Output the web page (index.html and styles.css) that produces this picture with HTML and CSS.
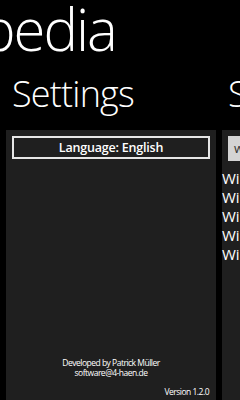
FILE: index.html
```html
<!DOCTYPE html>
<html>
<head>
<title>Wikipedia Settings</title>
<link rel="stylesheet" href="styles.css">
</head>
<body>

  <div class="app-title">Wikipedia</div>

  <div class="pivot">
    <div class="pivot-item">
      <div class="pivot-header">Settings</div>
      <div class="panel settings-panel">
        <button class="language-button">Language: English</button>
        <div class="spacer"></div>
        <div class="credits">
          Developed by Patrick Müller<br>
          software@4-haen.de
        </div>
        <div class="version">Version 1.2.0</div>
      </div>
    </div>

    <div class="pivot-item">
      <div class="pivot-header">Search</div>
      <div class="panel search-panel">
        <div class="search-box">wikipedia</div>
        <ul class="result-list">
          <li>Wikipedia</li>
          <li>Wikimedia</li>
          <li>Wikileaks</li>
          <li>Wikipedia (Deutsch)</li>
          <li>Wiki</li>
        </ul>
      </div>
    </div>
  </div>

</body>
</html>
```

FILE: styles.css
```css
:root {
  --page-bg: #000000;
  --panel-bg: #1f1f1f;
  --text-color: #ffffff;
  --border-light: #e6e6e6;
  --box-gray: #d4d4d4;
}

body {
  margin: 0;
  background-color: var(--page-bg);
  color: var(--text-color);
  font-family: 'Open Sans', sans-serif;
  width: 240px;
  height: 400px;
  overflow: hidden;
  display: flex;
  flex-direction: column;
}

.app-title {
  font-size: 58px;
  font-weight: 300;
  line-height: 58px;
  letter-spacing: -2px;
  margin-left: -117px;
  white-space: nowrap;
  height: 62px;
}

.pivot {
  display: flex;
  gap: 6px;
  padding-left: 6px;
  flex: 1;
  min-height: 0;
}

.pivot-item {
  display: flex;
  flex-direction: column;
  flex: 0 0 210px;
}

.pivot-header {
  font-size: 36px;
  font-weight: 300;
  line-height: 40px;
  letter-spacing: -0.8px;
  height: 68px;
  padding: 12px 0 0 6px;
  box-sizing: border-box;
  white-space: nowrap;
}

.panel {
  background-color: var(--panel-bg);
  flex: 1;
  display: flex;
  flex-direction: column;
  padding: 6px 6px 3px;
  box-sizing: border-box;
}

.language-button {
  font-family: 'Open Sans', sans-serif;
  font-size: 12.5px;
  font-weight: 600;
  letter-spacing: -0.2px;
  color: var(--text-color);
  background-color: var(--panel-bg);
  border: 2px solid var(--border-light);
  height: 23px;
  padding: 0;
  line-height: 18px;
}

.spacer {
  flex: 1;
}

.credits {
  font-size: 8.5px;
  letter-spacing: -0.5px;
  line-height: 10px;
  text-align: center;
  margin-bottom: 9px;
}

.version {
  font-size: 8.5px;
  letter-spacing: -0.5px;
  text-align: right;
  line-height: 10px;
  padding-right: 1px;
}

.search-box {
  background-color: var(--box-gray);
  color: #333;
  font-size: 13px;
  height: 25px;
  line-height: 25px;
  padding-left: 6px;
}

.result-list {
  list-style: none;
  margin: 8px 0 0 -6px;
  padding: 0;
  font-size: 15px;
  line-height: 19px;
}
```
